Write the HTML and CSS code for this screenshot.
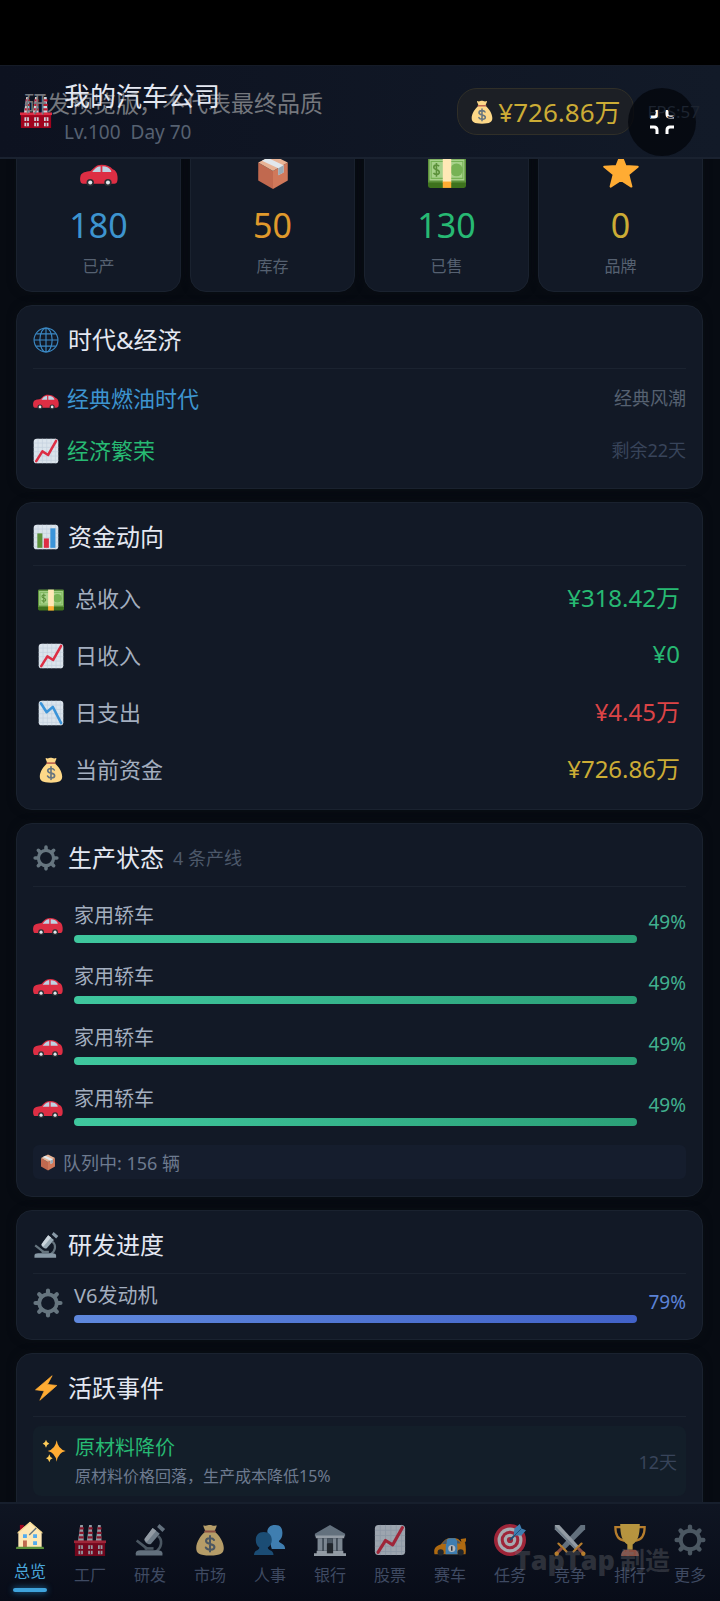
FILE: index.html
```html
<!DOCTYPE html>
<html lang="zh-CN">
<head>
  <meta charset="UTF-8" />
  <meta name="viewport" content="width=device-width, initial-scale=1" />
  <title>我的汽车公司</title>
  <link rel="stylesheet" href="styles.css">
</head>
<body>
  <!-- icon sprite -->
  <svg class="sprite" aria-hidden="true">
    <symbol id="i-car" viewBox="0 0 36 36">
      <path fill="#dd2e44" d="M35.500 23c-.4-3.200-1.500-5.500-4.500-6.600C28.500 13.400 25.500 12 20.500 12c-5.500 0-7.500 3.500-10.500 6-4.500.7-8.500 1.200-9.500 4.500-.7 2.500-.5 5 .3 6.500.4.700 1 1 2 1h30c1 0 1.800-.4 2.300-1.500.6-1.500.6-3.500.4-5.500z"/>
      <path fill="#bdd2e2" d="M19.500 13.500v5.500H11.600c2-2.300 4-5.500 7.900-5.500zM21.200 13.500c4 0 6.300 1.300 8 3.700l.5 1.800h-8.500z"/>
      <circle cx="9.700" cy="29" r="3.500" fill="#292f33"/><circle cx="9.700" cy="29" r="1.900" fill="#e1e8ed"/>
      <circle cx="26.500" cy="29" r="3.500" fill="#292f33"/><circle cx="26.500" cy="29" r="1.900" fill="#e1e8ed"/>
    </symbol>
    <symbol id="i-box" viewBox="0 0 36 36">
      <path fill="#c1694f" d="M4 10l14 8v17L4 27z"/>
      <path fill="#d0785a" d="M18 18l14-8v17l-14 8z"/>
      <path fill="#e8b395" d="M18 3 32 10 18 18 4 10z"/>
      <path fill="#e1e8ed" d="M7.500 8.200 13 5.500 28 12.500v7l-5 2.500v-6.500z"/>
      <path fill="#99aab5" d="M23 15.500 28 12.500v7l-5 2.500z"/>
    </symbol>
    <symbol id="i-cash" viewBox="0 0 36 36">
      <path fill="#3e721d" d="M0 27h36v5a2 2 0 0 1-2 2H2a2 2 0 0 1-2-2z"/>
      <path fill="#5c913b" d="M0 7q0-2 2-2h32q2 0 2 2v22H0z"/>
      <path fill="#a7d28b" d="M1.500 7h33v20h-33z"/>
      <path fill="none" stroke="#77b255" d="M3 9h30v16H3z"/>
      <circle cx="27" cy="17" r="6" fill="#77b255"/>
      <path fill="none" stroke="#5c913b" stroke-width="1.500" d="M10.500 13.500c-1-1.600-5-1.600-5 .9 0 3 5.200 1.600 5.200 4.700 0 2.600-4.300 2.800-5.500.7M8 10.500v13"/>
      <path fill="#ffe8b6" d="M14 5h8v24h-8z"/>
      <path fill="#ffac33" d="M14 28h8v6h-8z"/>
    </symbol>
    <symbol id="i-star" viewBox="0 0 36 36">
      <path fill="#ffac33" stroke="#ffac33" stroke-width="2" stroke-linejoin="round" d="M18 2.500 22.200 13.200 33.800 14 24.900 21.300 27.800 32.700 18 26.300 8.200 32.700 11.100 21.300 2.200 14 13.800 13.200z"/>
    </symbol>
    <symbol id="i-globe" viewBox="0 0 36 36">
      <g fill="none" stroke="#3b88c3" stroke-width="1.600">
        <circle cx="18" cy="18" r="16.500"/>
        <ellipse cx="18" cy="18" rx="8.500" ry="16.500"/>
        <path d="M18 1.500v33M1.500 18h33M4.500 9.500h27M4.500 26.500h27"/>
      </g>
    </symbol>
    <symbol id="i-up" viewBox="0 0 36 36">
      <rect x="1" y="1" width="34" height="34" rx="4" fill="#dbe4ec"/>
      <path stroke="#c3d1de" d="M7 1v34M13 1v34M19 1v34M25 1v34M31 1v34M1 7h34M1 13h34M1 19h34M1 25h34M1 31h34"/>
      <path fill="none" stroke="#dd2e44" stroke-width="3.500" stroke-linecap="round" stroke-linejoin="round" d="M4.500 32 13 18.500 21 23.500 32 4"/>
    </symbol>
    <symbol id="i-down" viewBox="0 0 36 36">
      <rect x="1" y="1" width="34" height="34" rx="4" fill="#dbe4ec"/>
      <path stroke="#c3d1de" d="M7 1v34M13 1v34M19 1v34M25 1v34M31 1v34M1 7h34M1 13h34M1 19h34M1 25h34M1 31h34"/>
      <path fill="none" stroke="#3b94d9" stroke-width="3.500" stroke-linecap="round" stroke-linejoin="round" d="M4 4.500 12 17 20.500 9.500 32 32"/>
    </symbol>
    <symbol id="i-bars" viewBox="0 0 36 36">
      <rect x="1" y="1" width="34" height="34" rx="4" fill="#dbe4ec"/>
      <path stroke="#c3d1de" d="M7 1v34M13 1v34M19 1v34M25 1v34M31 1v34M1 7h34M1 13h34M1 19h34M1 25h34M1 31h34"/>
      <path fill="#5c913b" d="M6 13h7v20H6z"/><path fill="#dd2e44" d="M15 20h7v13h-7z"/><path fill="#3b94d9" d="M24 6h7v27h-7z"/>
    </symbol>
    <symbol id="i-bag" viewBox="0 0 36 36">
      <path fill="#fdd888" d="M11 1.500c2 1 3 .5 4.500 0 1.500-.6 3-.6 4.500 0s3 1 5 0c.8 0 .5 1.500-.3 3L23 8.500c5.500 4 10.500 12 10.500 18.500 0 6-3.500 8.500-15.500 8.500S2.500 33 2.500 27C2.500 20.500 7.500 12.500 13 8.500L11.300 4.500c-.8-1.500-1-3-.3-3z"/>
      <path fill="none" stroke="#bf6952" stroke-width="2.200" stroke-linecap="round" d="M12.500 8.500h11"/>
      <path fill="none" stroke="#67757f" stroke-width="2.300" stroke-linecap="round" d="M22.500 18c-1.500-3-9-2.800-9 1 0 4.500 9.500 2.300 9.500 6.800 0 4-8 4-9.700.6M18 13.500v17.500"/>
    </symbol>
    <symbol id="i-gear" viewBox="0 0 36 36">
      <circle cx="18" cy="18" r="10.500" fill="none" stroke="#66757f" stroke-width="4.500"/>
      <g stroke="#66757f" stroke-width="5" stroke-linecap="round">
        <path d="M18 3v4M18 29v4M3 18h4M29 18h4M7.400 7.400l2.800 2.800M25.800 25.800l2.800 2.800M28.600 7.400l-2.800 2.800M10.200 25.800l-2.800 2.800"/>
      </g>
    </symbol>
    <symbol id="i-scope" viewBox="0 0 36 36">
      <path fill="none" stroke="#66757f" stroke-width="3" d="M27 13.500c5.500 4.500 4.500 13-3 18M3 18.500 15 28"/>
      <path fill="#8899a6" d="M2 33c0-2.500 2-3.500 5-3.500h19c4 0 6 1 6 3.500v2.500H2z"/>
      <path fill="#66757f" d="M12 26h10v3H12z"/>
      <path fill="#99aab5" d="M21 4.500 29 11 19 22.500c-3 1.500-8.500-3-7-6z"/>
      <path fill="#ccd6dd" d="M21 4.500l4 3.200-10.500 12.500c-1.900-1-3-2.400-2.500-3.700z"/>
      <path fill="#8899a6" d="M26 3.500 28.500 0l6.500 5.500-3 3.500z"/>
    </symbol>
    <symbol id="i-bolt" viewBox="0 0 36 36">
      <path fill="#ffac33" stroke="#ffac33" stroke-linejoin="round" d="M26.500 1 3.500 20.500l12 1.500L9.500 35l23.500-20.500-13-1.500z"/>
    </symbol>
    <symbol id="i-spark" viewBox="0 0 36 36">
      <path fill="#ffac33" d="M22 2q2 13.500 13.500 16Q24 20.500 22 34q-2-13.500-13.500-16Q20 15.500 22 2z"/>
      <path fill="#fdcb58" d="M6 1q1 5 5 6-4 1-5 6-1-5-5-6 4-1 5-6zM11 23q1 5 5 6-4 1-5 6-1-5-5-6 4-1 5-6z"/>
    </symbol>
    <symbol id="i-factory" viewBox="0 0 36 36">
      <path fill="#ccd6dd" d="M7 1h3l1 18H4.500zM17 1h3l1 18h-6.500zM27 1h3l1 18h-6.500z"/>
      <path stroke="#be1931" stroke-width="2.500" d="M6.500 5H11M6 10h5M5.500 15H11M16.500 5H21M16 10h5M15.500 15H21M26.500 5H31M26 10h5M25.500 15H31"/>
      <path fill="#a0041e" d="M1 20h34v16H1z"/><path fill="#dd2e44" d="M0 18.500h36v3H0z"/>
      <path fill="#ccd6dd" d="M5 24h5v4H5zM16 24h5v4h-5zM27 24h5v4h-5zM5 30h5v4H5zM16 30h5v4h-5zM27 30h5v4h-5z"/>
      <path stroke="#a0041e" d="M7.500 24v10M18.500 24v10M29.500 24v10"/>
    </symbol>
    <symbol id="i-home" viewBox="0 0 36 36">
      <path fill="#a0041e" d="M5 5h5v10H5z"/>
      <path fill="#ffe8b6" d="M3 14 18 1l15 13v20H3z"/>
      <path fill="#f3d78f" d="M18 1 2 14.500v2L18 3l16 13.500v-2z"/>
      <path stroke="#66757f" stroke-width="1.800" d="M17 18 26 9"/>
      <path fill="#55acee" d="M9 17h5v5H9zM22 17h5v5h-5zM22 26h5v5h-5z"/>
      <path fill="#c1694f" d="M9 25h5v9H9z"/>
      <path fill="#5c913b" d="M1 33h34q1 0 1 3H0q0-3 1-3z"/>
    </symbol>
    <symbol id="i-people" viewBox="0 0 36 36">
      <path fill="#55acee" d="M24 1c6 0 8 4 8 9 0 4-1.500 7-4 9 0 3 7 2 7 9H20L15 9c0-5 3-8 9-8z"/>
      <path fill="#226699" d="M11 9c6 0 9 4 9 9 0 4-2 7-4.500 8.500 0 4 6.500 2 6.500 8.500H0c0-6.500 6-4.500 6-8.500C3.500 25 2 22 2 18c0-5 3-9 9-9z"/>
    </symbol>
    <symbol id="i-bank" viewBox="0 0 36 36">
      <path fill="#8899a6" d="M18 1 35 11v3H1v-3z"/><path fill="#ccd6dd" d="M2 13h32v3H2zM3 30h30v3H3zM0 33h36v3H0z"/>
      <path fill="#aab8c2" d="M4 16h5v14H4zM11 16h4v14h-4zM21 16h4v14h-4zM27 16h5v14h-5z"/>
      <path fill="#66757f" d="M9 16h2v14H9zM25 16h2v14h-2zM15 16h6v6h-6z"/><path fill="#292f33" d="M14.500 22h7v11h-7z"/>
    </symbol>
    <symbol id="i-race" viewBox="0 0 36 36">
      <path fill="#f4900c" d="M.5 34c-1-6 .5-9 7-11 3.500-4 6-7 10-7h6c3.500 0 5 2 7 4l4.500 1c1 4 1 9 .5 13z"/>
      <path fill="#f4900c" d="M30 17l6-1v3l-2 3-3-1z"/>
      <path fill="#55acee" d="M15 17q1.500-1 3-1h6l2 3 .5 15H13c0-5 0-12 2-17z"/>
      <path fill="#66757f" d="M9 22.500q4-5 5.500-5.500l-.5 5.500zM26 18q3 1.500 4 4h-4z"/>
      <circle cx="20" cy="27.500" r="4" fill="#fff"/><path stroke="#292f33" stroke-width="1.500" d="M20 25v5"/>
      <circle cx="7.500" cy="32" r="3.500" fill="#292f33"/><circle cx="30" cy="32" r="3.500" fill="#292f33"/>
    </symbol>
    <symbol id="i-target" viewBox="0 0 36 36">
      <circle cx="18" cy="18" r="18" fill="#dd2e44"/><circle cx="18" cy="18" r="14" fill="#e8edf0"/>
      <circle cx="18" cy="18" r="10.500" fill="#dd2e44"/><circle cx="18" cy="18" r="7" fill="#e8edf0"/><circle cx="18" cy="18" r="3.500" fill="#dd2e44"/>
      <path stroke="#226699" stroke-width="2" d="M18 18 30 6"/>
      <path fill="#55acee" d="M22 13 23 5l6-5 2 5 5 2-5 6z"/>
      <path stroke="#226699" d="M22 14 31 5"/>
    </symbol>
    <symbol id="i-swords" viewBox="0 0 36 36">
      <path fill="#8899a6" d="M35 1v5L12 29l-4-4L30 1z"/><path fill="#ccd6dd" d="M1 1v5l23 23 4-4L6 1z"/><path fill="#99aab5" d="M1 6 24 29l1.500-1.500L1 2z"/>
      <path stroke="#ffac33" stroke-width="2.500" stroke-linecap="round" d="M5 22l9 9M31 22l-9 9"/>
      <path stroke="#c1694f" stroke-width="3.500" d="M9 27l-6 6M27 27l6 6"/>
      <circle cx="3" cy="33.500" r="2.500" fill="#ffac33"/><circle cx="33" cy="33.500" r="2.500" fill="#ffac33"/>
    </symbol>
    <symbol id="i-cup" viewBox="0 0 36 36">
      <path fill="none" stroke="#ffac33" stroke-width="2.500" d="M9 3.500H1.500C1.500 12 4 18 12 19M27 3.500h7.500C34.500 12 32 18 24 19"/>
      <path fill="#ffcc4d" d="M7 0h22c0 12-2 19-8 23v6h-6v-6C9 19 7 12 7 0z"/>
      <path fill="#c1694f" d="M12 29h12q4 2 4 7H8q0-5 4-7z"/>
    </symbol>
  </svg>

  <div class="statusbar"></div>

  <header class="topbar">
    <svg class="ico company-ico"><use href="#i-factory"/></svg>
    <div class="company">
      <h1>我的汽车公司</h1>
      <p><span>Lv.100</span><span>Day 70</span></p>
    </div>
    <div class="money"><svg class="ico"><use href="#i-bag"/></svg>¥726.86万</div>
    <span class="fps">FPS:57</span>
    <div class="preview-note">研发预览版，不代表最终品质</div>
    <button class="shrink" aria-label="退出全屏">
      <svg viewBox="0 0 28 28"><path d="M9 2v4q0 3-3 3H2M19 2v4q0 3 3 3h4M2 19h4q3 0 3 3v4M26 19h-4q-3 0-3 3v4"/></svg>
    </button>
  </header>

  <main>
    <section class="stats">
      <div class="stat blue"><svg class="ico"><use href="#i-car"/></svg><strong>180</strong><span>已产</span></div>
      <div class="stat orange"><svg class="ico"><use href="#i-box"/></svg><strong>50</strong><span>库存</span></div>
      <div class="stat green"><svg class="ico"><use href="#i-cash"/></svg><strong>130</strong><span>已售</span></div>
      <div class="stat gold"><svg class="ico"><use href="#i-star"/></svg><strong>0</strong><span>品牌</span></div>
    </section>

    <section class="card">
      <h2><svg class="ico"><use href="#i-globe"/></svg>时代&amp;经济</h2>
      <div class="era"><svg class="ico"><use href="#i-car"/></svg><b class="blue">经典燃油时代</b><span>经典风潮</span></div>
      <div class="era"><svg class="ico"><use href="#i-up"/></svg><b class="green">经济繁荣</b><span class="dim">剩余22天</span></div>
    </section>

    <section class="card">
      <h2><svg class="ico"><use href="#i-bars"/></svg>资金动向</h2>
      <div class="fund"><svg class="ico"><use href="#i-cash"/></svg><span>总收入</span><b class="green">¥318.42万</b></div>
      <div class="fund"><svg class="ico"><use href="#i-up"/></svg><span>日收入</span><b class="green">¥0</b></div>
      <div class="fund"><svg class="ico"><use href="#i-down"/></svg><span>日支出</span><b class="red">¥4.45万</b></div>
      <div class="fund"><svg class="ico"><use href="#i-bag"/></svg><span>当前资金</span><b class="gold">¥726.86万</b></div>
    </section>

    <section class="card">
      <h2><svg class="ico"><use href="#i-gear"/></svg>生产状态<small>4 条产线</small></h2>
      <div class="task"><svg class="ico"><use href="#i-car"/></svg><div class="task-body"><p>家用轿车</p><div class="bar"></div></div><span class="pct">49%</span></div>
      <div class="task"><svg class="ico"><use href="#i-car"/></svg><div class="task-body"><p>家用轿车</p><div class="bar"></div></div><span class="pct">49%</span></div>
      <div class="task"><svg class="ico"><use href="#i-car"/></svg><div class="task-body"><p>家用轿车</p><div class="bar"></div></div><span class="pct">49%</span></div>
      <div class="task"><svg class="ico"><use href="#i-car"/></svg><div class="task-body"><p>家用轿车</p><div class="bar"></div></div><span class="pct">49%</span></div>
      <div class="queue"><svg class="ico"><use href="#i-box"/></svg>队列中: 156 辆</div>
    </section>

    <section class="card card-tight">
      <h2><svg class="ico"><use href="#i-scope"/></svg>研发进度</h2>
      <div class="task research"><svg class="ico"><use href="#i-gear"/></svg><div class="task-body"><p>V6发动机</p><div class="bar"></div></div><span class="pct">79%</span></div>
    </section>

    <section class="card">
      <h2><svg class="ico"><use href="#i-bolt"/></svg>活跃事件</h2>
      <div class="event">
        <svg class="ico"><use href="#i-spark"/></svg>
        <div class="event-body"><h3>原材料降价</h3><p>原材料价格回落，生产成本降低15%</p></div>
        <span>12天</span>
      </div>
    </section>
  </main>

  <nav class="tabs">
    <a href="#" class="active"><svg class="ico"><use href="#i-home"/></svg>总览</a>
    <a href="#"><svg class="ico"><use href="#i-factory"/></svg>工厂</a>
    <a href="#"><svg class="ico"><use href="#i-scope"/></svg>研发</a>
    <a href="#"><svg class="ico"><use href="#i-bag"/></svg>市场</a>
    <a href="#"><svg class="ico"><use href="#i-people"/></svg>人事</a>
    <a href="#"><svg class="ico"><use href="#i-bank"/></svg>银行</a>
    <a href="#"><svg class="ico"><use href="#i-up"/></svg>股票</a>
    <a href="#"><svg class="ico"><use href="#i-race"/></svg>赛车</a>
    <a href="#"><svg class="ico"><use href="#i-target"/></svg>任务</a>
    <a href="#"><svg class="ico"><use href="#i-swords"/></svg>竞争</a>
    <a href="#"><svg class="ico"><use href="#i-cup"/></svg>排行</a>
    <a href="#"><svg class="ico"><use href="#i-gear"/></svg>更多</a>
    <div class="watermark"><b>TapTap</b>制造</div>
  </nav>
</body>
</html>
```

FILE: styles.css
```css
* {
  box-sizing: border-box;
}

body {
  margin: 0;
  height: 100vh;
  display: flex;
  flex-direction: column;
  overflow: hidden;
  background: #070b12;
  color: #e4e8f2;
  font-family: "Noto Sans", "Noto Sans CJK SC", sans-serif;
  font-weight: 400;
}

h1, h2, h3, p {
  margin: 0;
  font-weight: 400;
}

b, strong {
  font-weight: 400;
}

.sprite {
  position: absolute;
  width: 0;
  height: 0;
}

.ico {
  flex: none;
  width: 26px;
  height: 26px;
}

.blue { color: #3d94cf; }
.orange { color: #e09a2c; }
.green { color: #27b973; }
.gold { color: #ccac35; }
.red { color: #dc4446; }

/* Header */
.statusbar {
  flex: none;
  height: 65px;
  background: #000;
}

.topbar {
  position: relative;
  flex: none;
  height: 94px;
  padding: 0 20px;
  display: flex;
  align-items: center;
  background: linear-gradient(90deg, #0d1220, #121a28);
  border-top: 1px solid #151b27;
  border-bottom: 2px solid #1a2230;
}

.company-ico {
  width: 32px;
  height: 32px;
}

.company {
  position: relative;
  z-index: 1;
  flex: 1;
  padding-left: 12px;
}

.company h1 {
  font-size: 26px;
  line-height: 34px;
}

.company p {
  display: flex;
  gap: 10px;
  margin-top: 6px;
  font-size: 19px;
  line-height: 26px;
  color: #566171;
}

.money {
  display: flex;
  align-items: center;
  gap: 4px;
  height: 47px;
  padding: 0 12px;
  font-size: 26px;
  line-height: 36px;
  color: #ccac35;
  background: #1c1f25;
  border: 1px solid #302f28;
  border-radius: 20px;
}

.money .ico {
  width: 24px;
  height: 24px;
}

.fps {
  position: relative;
  z-index: 2;
  margin-left: 14px;
  font-size: 17px;
  color: #1d2430;
  pointer-events: none;
}

.preview-note {
  position: absolute;
  left: 24px;
  top: 21px;
  font-size: 23px;
  line-height: 32px;
  color: #74777d;
}

.shrink {
  position: absolute;
  z-index: 1;
  right: 24px;
  top: 22px;
  width: 68px;
  height: 68px;
  padding: 0;
  display: grid;
  place-items: center;
  border: 0;
  border-radius: 50%;
  background: rgba(4, 6, 12, 0.8);
}

.shrink svg {
  width: 28px;
  height: 28px;
  fill: none;
  stroke: #fff;
  stroke-width: 3;
}

/* Dashboard */
main {
  flex: 1;
  min-height: 0;
  overflow: hidden;
  padding: 0 17px 0 16px;
  display: flex;
  flex-direction: column;
  gap: 13px;
}

.card, .stat {
  flex: none;
  background: #121926;
  border: 1px solid #1a222f;
  border-radius: 16px;
  box-shadow: 0 0 8px #0a0e14;
}

.stats {
  flex: none;
  display: grid;
  grid-template-columns: repeat(4, 1fr);
  gap: 9px;
  margin-top: -26px;
}

.stat {
  display: flex;
  flex-direction: column;
  align-items: center;
  padding: 18px 0 13px;
}

.stat .ico {
  width: 38px;
  height: 38px;
}

.stat strong {
  margin: 12px 0 6px;
  font-size: 34px;
  line-height: 46px;
}

.stat span {
  font-size: 16px;
  line-height: 24px;
  color: #566171;
}

.card {
  padding: 16px 16px 11px;
}

.card:last-child {
  padding-bottom: 40px;
}

.card h2 {
  display: flex;
  align-items: center;
  gap: 9px;
  padding-bottom: 10px;
  margin-bottom: 4px;
  border-bottom: 1px solid #1b2330;
  font-size: 24px;
  line-height: 36px;
}

.card h2 small {
  font-size: 18px;
  color: #4c586a;
}

.era, .fund {
  display: flex;
  align-items: center;
  height: 52px;
  font-size: 22px;
}

.era b, .era span, .fund b, .fund span {
  padding-bottom: 4px;
}

.era b {
  flex: 1;
  padding-left: 8px;
}

.era span {
  font-size: 18px;
  color: #566171;
}

.era .dim {
  color: #38445a;
}

.fund {
  height: 57px;
  padding: 0 6px 0 5px;
}

.fund span {
  flex: 1;
  padding-left: 11px;
  color: #a3aebf;
}

.fund b {
  font-size: 24px;
}

.task {
  display: flex;
  align-items: center;
  gap: 11px;
  padding: 11px 0 9px;
}

.task .ico {
  width: 30px;
  height: 30px;
}

.task-body {
  flex: 1;
}

.task p {
  margin-bottom: 5px;
  font-size: 20px;
  line-height: 28px;
  color: #a3aebf;
}

.bar {
  height: 8px;
  border-radius: 4px;
  background: linear-gradient(90deg, #3fc79e, #2ba077);
}

.pct {
  min-width: 37px;
  padding-bottom: 2px;
  text-align: right;
  font-size: 19px;
  color: #41b08f;
}

.research .bar {
  background: linear-gradient(90deg, #5f88dd, #4262c8);
}

.research .pct {
  color: #5b82d6;
}

.queue {
  display: flex;
  align-items: center;
  gap: 6px;
  height: 34px;
  margin: 10px 0 6px;
  padding: 0 6px;
  border-radius: 6px;
  background: #151d2d;
  font-size: 18px;
  color: #6d7a8f;
}

.queue .ico {
  width: 18px;
  height: 18px;
}

.card-tight {
  padding-bottom: 7px;
}

.card-tight h2 {
  margin-bottom: 0;
}

.card-tight .task {
  padding-top: 8px;
}

.event {
  display: flex;
  align-items: center;
  margin-top: 9px;
  padding: 8px 9px;
  border-radius: 8px;
  background: #131e29;
}

.event .ico {
  width: 24px;
  height: 24px;
  align-self: flex-start;
  margin-top: 5px;
}

.event-body {
  flex: 1;
  padding-left: 9px;
}

.event h3 {
  font-size: 20px;
  line-height: 28px;
  color: #27b973;
}

.event p {
  margin-top: 2px;
  font-size: 16px;
  line-height: 24px;
  color: #6d7a8f;
}

.event span {
  font-size: 18px;
  color: #38445a;
}

/* Bottom tabs */
.tabs {
  position: relative;
  flex: none;
  display: grid;
  grid-template-columns: repeat(12, 1fr);
  height: 99px;
  background: linear-gradient(#0f1522, #080c18);
  border-top: 2px solid #171f2d;
}

.tabs a {
  display: flex;
  flex-direction: column;
  align-items: center;
  padding-top: 20px;
  font-size: 16px;
  line-height: 24px;
  color: #3f4a62;
  text-decoration: none;
}

.tabs .ico {
  width: 32px;
  height: 32px;
  margin-bottom: 7px;
  opacity: 0.7;
}

.tabs .active {
  padding-top: 17px;
  color: #4aa8dc;
}

.tabs .active .ico {
  width: 28px;
  height: 28px;
  margin-bottom: 10px;
  opacity: 1;
}

.tabs .active::after {
  content: "";
  width: 34px;
  height: 4px;
  margin-top: 5px;
  border-radius: 2px;
  background: #3fa3dc;
  box-shadow: 0 0 6px #1f6fa5;
}

.watermark {
  position: absolute;
  right: 50px;
  bottom: 23px;
  display: flex;
  align-items: center;
  gap: 5px;
  font-size: 25px;
  line-height: 36px;
  font-weight: 700;
  color: rgba(110, 112, 118, 0.35);
}

.watermark b {
  font-family: "Open Sans", sans-serif;
  font-size: 27px;
  font-weight: 800;
}
```
